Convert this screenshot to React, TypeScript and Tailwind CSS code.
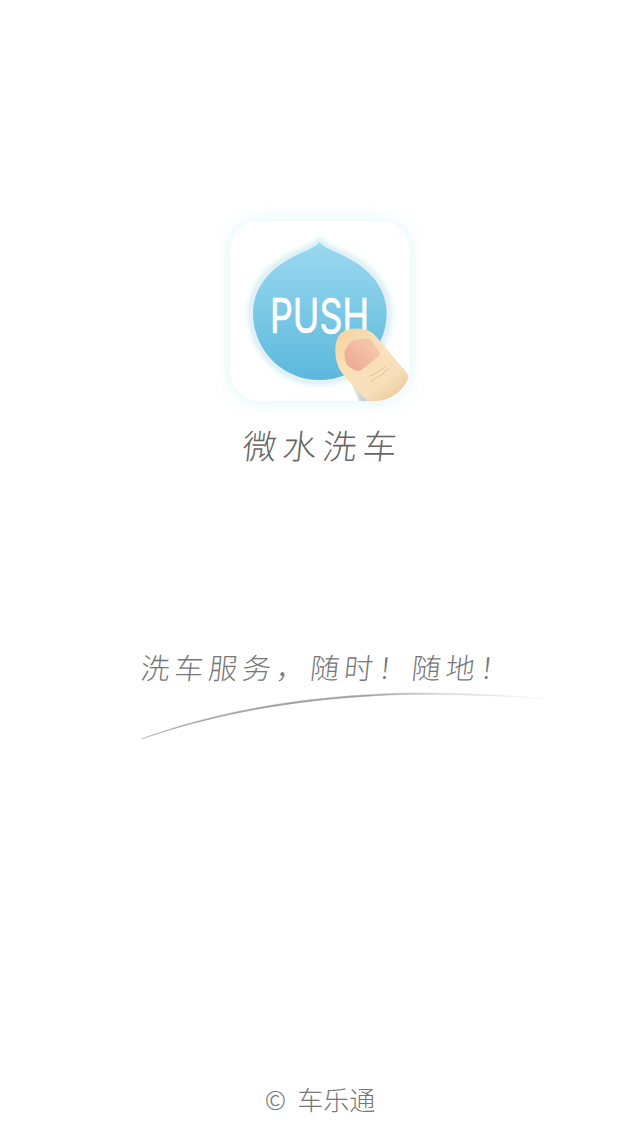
const cjk = "font-['Noto_Sans_CJK_SC','Noto_Sans_CJK_TC',sans-serif]"

function PushIcon() {
  return (
    <svg width="180" height="180" viewBox="0 0 180 180" className="block overflow-visible">
      <defs>
        <linearGradient id="drop" x1="0" y1="0" x2="0" y2="1">
          <stop offset="0" stopColor="#9bd9f0" />
          <stop offset="1" stopColor="#5bb8dc" />
        </linearGradient>
        <linearGradient id="finger" x1="0.1" y1="0.1" x2="0.8" y2="1">
          <stop offset="0" stopColor="#f6d5a4" />
          <stop offset="0.3" stopColor="#f9e0b8" />
          <stop offset="0.75" stopColor="#f7dfba" />
          <stop offset="1" stopColor="#ecca97" />
        </linearGradient>
        <linearGradient id="nail" x1="0" y1="1" x2="1" y2="0">
          <stop offset="0" stopColor="#eda58e" />
          <stop offset="1" stopColor="#f6cfb4" />
        </linearGradient>
        <linearGradient id="wedge" x1="0" y1="0" x2="1" y2="0">
          <stop offset="0" stopColor="#f4f5f6" />
          <stop offset="1" stopColor="#bfc2c6" />
        </linearGradient>
        <filter id="halo" x="-20%" y="-20%" width="140%" height="140%">
          <feGaussianBlur stdDeviation="2.5" />
        </filter>
        <clipPath id="card">
          <rect width="180" height="180" rx="30" />
        </clipPath>
      </defs>
      <path
        d="M89.5 15C95 24 110 27 126 36C148 48 162 70 162 92C162 132 130 164 89.5 164C50 164 18 132 18 92C18 70 31 48 53 36C69 27 84 24 89.5 15Z"
        fill="#d4f3f4"
        filter="url(#halo)"
      />
      <path
        d="M89.5 17C95 25 110 28 125 37C147 49 160.7 70 160.7 92C160.7 131 129 163 89.5 163C50 163 19 131 19 92C19 70 32 49 54 37C69 28 84 25 89.5 17Z"
        fill="#e4f0f7"
      />
      <path
        d="M89.5 21C95 28 109 31 123 40C144 52 156.7 71 156.7 92C156.7 129 126.5 159 89.5 159C52.5 159 23 129 23 92C23 71 35 52 56 40C70 31 84 28 89.5 21Z"
        fill="url(#drop)"
      />
      <text
        x="40"
        y="112"
        textLength="99"
        lengthAdjust="spacingAndGlyphs"
        fontFamily="Inter, sans-serif"
        fontSize="48"
        fontWeight="400"
        fill="#ffffff"
        stroke="#ffffff"
        strokeWidth="0.7"
        strokeLinejoin="round"
      >
        PUSH
      </text>
      <g clipPath="url(#card)">
        <path d="M118 155L129 180H138Z" fill="url(#wedge)" />
        <path
          d="M111 112C120 106 135 106 144 113L177 152Q179 156 177 160C172 170 162 179 147 180L137 180C127 168 112 155 108 145C104 134 104 119 111 112Z"
          fill="url(#finger)"
        />
        <path
          d="M114.500 130C117 125 120 121 123 119.500Q125 118.500 128 118.300L137 117.500Q140 117.400 142 120L149.500 131Q151 133 149 135L132 148.500Q129 151 126 149.500L120 146.500Q116.500 144.500 115.500 140Q114 134 114.500 130Z"
          fill="url(#nail)"
        />
        <path d="M141 160Q150 156 158 148M140 155Q148 152 155 146" fill="none" stroke="#e0bb8c" strokeWidth="0.8" strokeLinecap="round" />
      </g>
    </svg>
  )
}

function Swoosh() {
  return (
    <svg width="410" height="50" viewBox="0 0 410 50" className="block self-start ml-[140px] mt-[4px]">
      <defs>
        <linearGradient id="swoosh" x1="0" y1="0" x2="1" y2="0">
          <stop offset="0" stopColor="#a3a3a3" />
          <stop offset="0.55" stopColor="#a0a0a0" />
          <stop offset="0.75" stopColor="#d8d8d8" />
          <stop offset="1" stopColor="#f6f6f6" />
        </linearGradient>
      </defs>
      <path
        d="M1.500 47C60 25 150 3 273 1C320 1 370 3 406 7C370 4 320 2.400 273 2.400C150 4.500 60 27 1.500 47Z"
        fill="url(#swoosh)"
        stroke="url(#swoosh)"
        strokeWidth="0.4"
      />
    </svg>
  )
}

export default function App() {
  return (
    <div className={`w-[640px] h-[1136px] bg-white flex flex-col items-center pt-[221px] pb-[19px] overflow-hidden ${cjk}`}>
      <div className="w-[180px] h-[180px] rounded-[30px] bg-white shadow-[0_0_16px_rgba(190,235,245,0.5)]">
        <PushIcon />
      </div>
      <h1 className="mt-[20px] text-[34px] leading-[48px] font-light tracking-[6px] text-[#666666] pl-[6px] -skew-x-6">微水洗车</h1>
      <p className="mt-[175px] text-[29px] leading-[44px] font-light tracking-[4.9px] text-[#777777] whitespace-nowrap pl-[14px] -skew-x-6">洗车服务，随时！随地！</p>
      <Swoosh />
      <p className="mt-auto text-[26px] leading-[36px] font-light text-[#777777] flex items-center gap-[11px]">
        <span>©</span>
        <span>车乐通</span>
      </p>
    </div>
  )
}
